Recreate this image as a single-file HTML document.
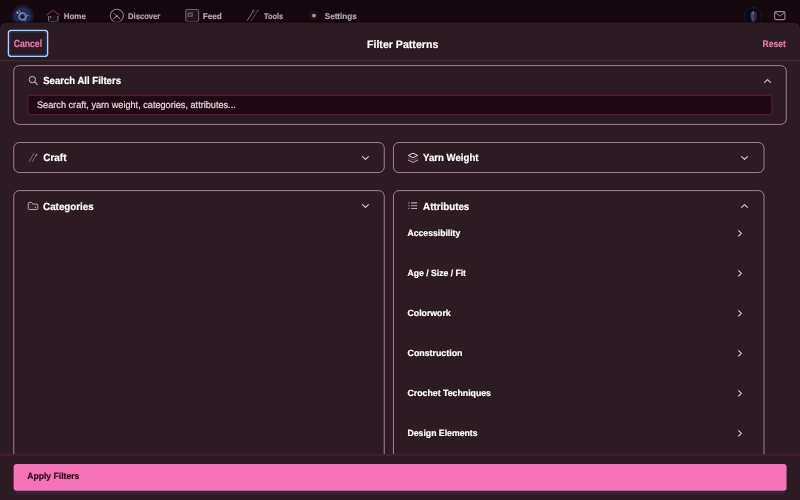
<!DOCTYPE html>
<html lang="en">
<head>
<meta charset="utf-8">
<title>Filter Patterns</title>
<style>
*{box-sizing:border-box;margin:0;padding:0}
html,body{width:800px;height:500px;overflow:hidden;background:#15070e;font-family:"Liberation Sans",sans-serif;color:#fff}
body{position:relative}
.t{position:absolute;left:0;top:0;white-space:nowrap;line-height:1;font-weight:bold;color:#fff;transform-origin:0 0;text-rendering:geometricPrecision;-webkit-text-stroke:.2px currentColor}
.txt{position:absolute;left:0;top:0;width:800px;height:500px;will-change:transform;pointer-events:none}
.t.pink{color:#ec79ad}
.t.pink2{color:#e779ab}
.t.ph{font-weight:normal;color:#e0d5db;-webkit-text-stroke:.22px currentColor}
.t.row{color:#fff}
.t.dark{color:#2b0a1b}
.t.nv{color:#b0a6ac}
.ic{position:absolute;overflow:visible}
.nav{position:absolute;left:0;top:0;width:800px;height:32px;background:#15070e}
.sheet{position:absolute;left:0;top:0;transform:translateY(22.400px);width:800px;height:480px;background:#2c1b22;border-radius:6px 6px 0 0;box-shadow:0 -1px 1px rgba(8,0,4,.5)}
</style>
</head>
<body>
<div class="nav">
<svg class="ic" style="left:0;top:0" width="800" height="32" viewBox="0 0 800 32" fill="none">
  <!-- logo -->
  <defs><filter id="lb" x="-30%" y="-30%" width="160%" height="160%"><feGaussianBlur stdDeviation=".45"/></filter></defs>
  <circle cx="22.650" cy="16.200" r="11.350" fill="#23131c"/>
  <circle cx="22.650" cy="16.200" r="9.500" fill="#141f3e"/>
  <circle cx="22.650" cy="16.200" r="8.700" fill="#1b2d5b"/>
  <g filter="url(#lb)">
    <circle cx="22.500" cy="16.500" r="3.400" stroke="#6c7894" stroke-width="2"/>
    <circle cx="22.300" cy="16.700" r="1.700" fill="#121936"/>
    <path d="M17.300 12.500L20.200 14.600M19.200 11L21.300 13.600M24.800 19.200L25.600 21.400M25.700 16.300L28.600 15.300" stroke="#8592ae" stroke-width=".8" stroke-linecap="round"/>
    <circle cx="17.300" cy="12.500" r=".85" fill="#d0d8e6"/><circle cx="19.200" cy="11" r=".65" fill="#9aa6be"/>
  </g>
  <!-- home -->
  <rect x="49.200" y="15.600" width="8.200" height="6" fill="#1d1017"/>
  <path d="M48.600 16V20.500a1.100 1.100 0 0 0 1.100 1.100H56.800a1.100 1.100 0 0 0 1.100-1.100V16" stroke="#7a7077" stroke-width="1.150"/>
  <path d="M46.800 15L52.900 10.100L59.400 15" stroke="#6b2f4e" stroke-width="1.050" stroke-linecap="round" stroke-linejoin="round"/>
  <rect x="49.900" y="16.400" width="1.300" height="1.400" fill="#a29aa0"/>
  <!-- discover -->
  <circle cx="116.850" cy="15.750" r="6.550" stroke="#887d84" stroke-width="1.100"/>
  <path d="M113.600 13L116.800 15.800" stroke="#857a81" stroke-width=".9" stroke-linecap="round"/>
  <path d="M113.700 18.600L116.800 15.800L119.800 18.600" stroke="#8f848b" stroke-width="1.100" stroke-linecap="round" stroke-linejoin="round"/>
  <circle cx="116.800" cy="15.800" r=".9" fill="#a0969c"/>
  <!-- feed -->
  <rect x="185.750" y="9.550" width="12.900" height="12.100" rx="1.600" fill="#23161d" stroke="#6d6269" stroke-width="1.100"/>
  <rect x="188" y="13" width="4.200" height="3.200" fill="#35282f" stroke="#7b7077" stroke-width=".8"/>
  <!-- tools -->
  <path d="M247.200 20.600L252.800 11.800" stroke="#897c84" stroke-width=".85" stroke-linecap="round"/>
  <circle cx="253.300" cy="10.800" r=".9" stroke="#897c84" stroke-width=".6"/>
  <path d="M250.800 21.200L257.600 10.700" stroke="#7a3a55" stroke-width=".85" stroke-linecap="round"/>
  <circle cx="257.700" cy="10.500" r=".6" fill="#9a8890"/>
  <!-- settings -->
  <circle cx="313.900" cy="15.600" r="5.600" fill="#1c0d15"/>
  <circle cx="313.900" cy="15.600" r="3.800" fill="#241219"/>
  <circle cx="313.900" cy="15.600" r="1.900" fill="#a896a0"/>
  <!-- avatar -->
  <defs><filter id="fb" x="-30%" y="-30%" width="160%" height="160%"><feGaussianBlur stdDeviation=".55"/></filter>
  <clipPath id="ac"><circle cx="753" cy="16.300" r="8.500"/></clipPath></defs>
  <circle cx="753" cy="16.300" r="8.800" fill="#070b16" stroke="#2a1e28" stroke-width=".7"/>
  <g clip-path="url(#ac)" filter="url(#fb)">
    <path d="M754 10.900c-1.900 0-3.300 1.700-3.300 4.100c0 2.300.9 4.800 1.800 7.400h1.500z" fill="#235381"/>
    <path d="M754 10.900c1.700 0 3.100 1.700 3.100 4.100c0 2.300-.8 4.800-1.600 7.400h-1.500z" fill="#5f1621"/>
    <path d="M751.600 13.600c.5-1.200 1.300-1.800 2.200-1.800v2.600z" fill="#3f7aa6"/>
  </g>
  <!-- mail -->
  <rect x="774.650" y="11.650" width="10.300" height="8" rx="1.500" stroke="#998c93" stroke-width="1.100"/>
  <path d="M775.200 12.600L779.800 16.100L784.400 12.600" stroke="#998c93" stroke-width="1" stroke-linejoin="round" stroke-linecap="round"/>
</svg>
</div>

<div class="sheet"></div>
<svg class="ic" style="left:0;top:22px" width="800" height="478" viewBox="0 22 800 478" fill="none">
  <rect x="0" y="60" width="800" height=".8" fill="#4b3a42"/>
  <!-- cancel focus ring -->
  <rect x="8.500" y="30.500" width="39.050" height="25.850" rx="2.700" fill="#2a1a22" stroke="#b4cffb" stroke-width="1.500"/>
  <rect x="9.900" y="31.900" width="36.250" height="23.050" rx="1.700" stroke="#1a3465" stroke-width="1.300"/>
  <!-- cards -->
  <g stroke="#a87d92" stroke-width="1">
    <rect x="13.750" y="65.600" width="772.500" height="58.800" rx="5.500"/>
    <rect x="13.750" y="142.500" width="370.500" height="30" rx="5.500"/>
    <rect x="393.450" y="142.500" width="370.550" height="30" rx="5.500"/>
    <rect x="13.750" y="190.600" width="370.500" height="340" rx="5.500"/>
    <rect x="393.450" y="190.600" width="370.550" height="340" rx="5.500"/>
  </g>
  <!-- input -->
  <rect x="27.700" y="95.300" width="744.200" height="19.400" rx="3" fill="#200b14" stroke="#541b33" stroke-width="1.200"/>
</svg>

<!-- search card -->
<svg class="ic" style="left:28px;top:75.100px" width="10" height="10" viewBox="0 0 10 10" fill="none">
  <circle cx="4.350" cy="4.600" r="3.200" fill="#39252f" stroke="#cbbbc3" stroke-width=".95"/>
  <path d="M6.900 7.100L9.200 9.400" stroke="#cbbbc3" stroke-width="1.150" stroke-linecap="round"/>
</svg>
<svg class="ic" style="left:763.60px;top:78.60px" width="7" height="4" viewBox="0 0 7 4"><path d="M.6 3.400L3.500 .6 6.400 3.400" stroke="#d9cbd2" stroke-width="1.150" stroke-linecap="round" stroke-linejoin="round" fill="none"/></svg>

<!-- craft -->
<svg class="ic" style="left:28.400px;top:152.200px" width="10" height="11" viewBox="0 0 10 11" fill="none">
  <path d="M1.200 9.500L5.800 1.500" stroke="#92828a" stroke-width=".8" stroke-linecap="round"/>
  <path d="M4.400 9.500L8.300 2.900" stroke="#a9688a" stroke-width=".8" stroke-linecap="round"/>
  <path d="M8 3.400L8.800 2.200" stroke="#d9cbd2" stroke-width=".8" stroke-linecap="round"/>
</svg>
<svg class="ic" style="left:361.50px;top:155.60px" width="7" height="4" viewBox="0 0 7 4"><path d="M.6 .6L3.5 3.400 6.400 .6" stroke="#d9cbd2" stroke-width="1.150" stroke-linecap="round" stroke-linejoin="round" fill="none"/></svg>

<!-- yarn weight -->
<svg class="ic" style="left:407px;top:152px" width="12" height="12" viewBox="0 0 12 12" fill="none">
  <path d="M6 1.200L1.300 3.400 6 5.600l4.700-2.200z" stroke="#e6dae0" stroke-width="1" stroke-linejoin="round"/>
  <path d="M1.300 5.700L6 8l4.700-2.300" stroke="#9a4674" stroke-width=".85" stroke-linejoin="round" stroke-linecap="round"/>
  <path d="M1.300 8.100L6 10.400l4.700-2.300" stroke="#d59fbb" stroke-width="1" stroke-linejoin="round" stroke-linecap="round"/>
</svg>
<svg class="ic" style="left:741.20px;top:155.60px" width="7" height="4" viewBox="0 0 7 4"><path d="M.6 .6L3.5 3.400 6.400 .6" stroke="#d9cbd2" stroke-width="1.150" stroke-linecap="round" stroke-linejoin="round" fill="none"/></svg>

<!-- categories -->
<svg class="ic" style="left:27px;top:200.800px" width="12" height="9" viewBox="0 0 12 9" fill="none">
  <path d="M1.250 2.200a.9.900 0 0 1 .9-.9h2.300l1.500 1.800h3.900a.9.900 0 0 1 .9.900v3.600a.9.900 0 0 1-.9.900H2.150a.9.900 0 0 1-.9-.9z" fill="#36232c" stroke="#c4b1bb" stroke-width=".9" stroke-linejoin="round"/>
  <circle cx="8.400" cy="6.500" r=".6" fill="#e6dae0"/>
</svg>
<svg class="ic" style="left:361.50px;top:204.10px" width="7" height="4" viewBox="0 0 7 4"><path d="M.6 .6L3.5 3.400 6.400 .6" stroke="#d9cbd2" stroke-width="1.150" stroke-linecap="round" stroke-linejoin="round" fill="none"/></svg>

<!-- attributes -->
<svg class="ic" style="left:407px;top:201px" width="11" height="9" viewBox="0 0 11 9" fill="none">
  <path d="M4.100 1.900h6M4.100 4.700h6M4.100 7.500h6" stroke="#b8a8b0" stroke-width="1.100"/>
  <path d="M1 1.900h1.800M1 4.700h1.800M1 7.500h1.800" stroke="#8f7383" stroke-width="1.100"/>
</svg>
<svg class="ic" style="left:741.20px;top:204.10px" width="7" height="4" viewBox="0 0 7 4"><path d="M.6 3.400L3.500 .6 6.400 3.400" stroke="#d9cbd2" stroke-width="1.150" stroke-linecap="round" stroke-linejoin="round" fill="none"/></svg>
<svg class="ic" style="left:738.05px;top:229.50px" width="4.100" height="6.600" viewBox="0 0 4.100 6.600"><path d="M.6 .6L3.500 3.300 .6 6" stroke="#d9cbd2" stroke-width="1.100" stroke-linecap="round" stroke-linejoin="round" fill="none"/></svg><svg class="ic" style="left:738.05px;top:269.50px" width="4.100" height="6.600" viewBox="0 0 4.100 6.600"><path d="M.6 .6L3.500 3.300 .6 6" stroke="#d9cbd2" stroke-width="1.100" stroke-linecap="round" stroke-linejoin="round" fill="none"/></svg><svg class="ic" style="left:738.05px;top:309.50px" width="4.100" height="6.600" viewBox="0 0 4.100 6.600"><path d="M.6 .6L3.500 3.300 .6 6" stroke="#d9cbd2" stroke-width="1.100" stroke-linecap="round" stroke-linejoin="round" fill="none"/></svg><svg class="ic" style="left:738.05px;top:349.50px" width="4.100" height="6.600" viewBox="0 0 4.100 6.600"><path d="M.6 .6L3.500 3.300 .6 6" stroke="#d9cbd2" stroke-width="1.100" stroke-linecap="round" stroke-linejoin="round" fill="none"/></svg><svg class="ic" style="left:738.05px;top:389.50px" width="4.100" height="6.600" viewBox="0 0 4.100 6.600"><path d="M.6 .6L3.500 3.300 .6 6" stroke="#d9cbd2" stroke-width="1.100" stroke-linecap="round" stroke-linejoin="round" fill="none"/></svg><svg class="ic" style="left:738.05px;top:429.50px" width="4.100" height="6.600" viewBox="0 0 4.100 6.600"><path d="M.6 .6L3.500 3.300 .6 6" stroke="#d9cbd2" stroke-width="1.100" stroke-linecap="round" stroke-linejoin="round" fill="none"/></svg>

<svg class="ic" style="left:0;top:440px" width="800" height="60" viewBox="0 440 800 60" fill="none">
  <defs><filter id="sh" x="-2%" y="-30%" width="104%" height="180%"><feGaussianBlur stdDeviation="1.400"/></filter></defs>
  <rect x="0" y="454.200" width="800" height="46" fill="#2c1b22"/>
  <rect x="0" y="454.200" width="800" height="1.300" fill="#531e35"/>
  <rect x="15" y="468" width="770" height="25" rx="3" fill="#43315f" opacity=".8" filter="url(#sh)"/>
  <rect x="13.300" y="463.600" width="773.600" height="27.800" rx="3.300" fill="#3f0e3c"/>
  <rect x="13.600" y="463.900" width="773" height="26.900" rx="3" fill="#f373b6"/>
</svg>
<div class="txt">
<div class="t nv" style="font-size:8.33px;transform:translate(63.7px,12px) scaleX(0.9572);">Home</div>
<div class="t nv" style="font-size:8.33px;transform:translate(128.0px,12px) scaleX(0.9181);">Discover</div>
<div class="t nv" style="font-size:8.33px;transform:translate(202.8px,12px) scaleX(0.9767);">Feed</div>
<div class="t nv" style="font-size:8.33px;transform:translate(263.9px,12px) scaleX(0.8927);">Tools</div>
<div class="t nv" style="font-size:8.33px;transform:translate(324.8px,12px) scaleX(0.9693);">Settings</div>
<div class="t pink" style="font-size:10.25px;transform:translate(13.7px,40px) scaleX(0.8441);">Cancel</div>
<div class="t " style="font-size:10.9px;transform:translate(367.0px,40px) scaleX(0.9737);">Filter Patterns</div>
<div class="t pink2" style="font-size:9.6px;transform:translate(762.6px,40px) scaleX(0.8873);">Reset</div>
<div class="t " style="font-size:10.25px;transform:translate(43.25px,77px) scaleX(0.9323);">Search All Filters</div>
<div class="t ph" style="font-size:9.6px;transform:translate(37.0px,101px) scaleX(0.9532);">Search craft, yarn weight, categories, attributes...</div>
<div class="t " style="font-size:10.25px;transform:translate(43.3px,154px) scaleX(0.9671);">Craft</div>
<div class="t " style="font-size:10.25px;transform:translate(423.1px,154px) scaleX(0.9375);">Yarn Weight</div>
<div class="t " style="font-size:10.25px;transform:translate(43.1px,203px) scaleX(0.9554);">Categories</div>
<div class="t " style="font-size:10.25px;transform:translate(423.1px,203px) scaleX(0.9548);">Attributes</div>
<div class="t row" style="font-size:8.97px;transform:translate(407.5px,229px) scaleX(0.9626);">Accessibility</div><div class="t row" style="font-size:8.97px;transform:translate(407.5px,269px) scaleX(0.962);">Age / Size / Fit</div><div class="t row" style="font-size:8.97px;transform:translate(407.5px,309px) scaleX(0.9738);">Colorwork</div><div class="t row" style="font-size:8.97px;transform:translate(407.5px,349px) scaleX(0.9851);">Construction</div><div class="t row" style="font-size:8.97px;transform:translate(407.5px,389px) scaleX(0.9759);">Crochet Techniques</div><div class="t row" style="font-size:8.97px;transform:translate(407.5px,429px) scaleX(0.9684);">Design Elements</div>
<div class="t dark" style="font-size:8.97px;transform:translate(27.25px,472px) scaleX(0.9598);">Apply Filters</div>
</div>
</body>
</html>
